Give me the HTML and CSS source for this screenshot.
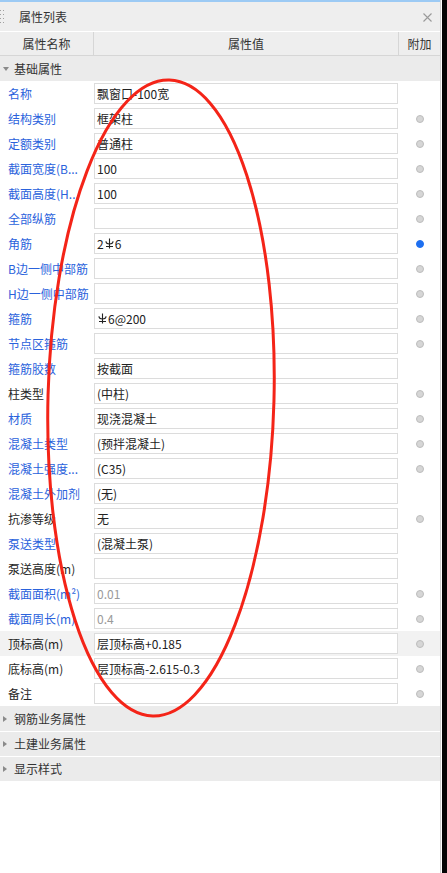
FILE: index.html
```html
<!DOCTYPE html>
<html lang="zh">
<head>
<meta charset="utf-8">
<title>属性列表</title>
<link rel="stylesheet" href="styles.css">
</head>
<body>
<div class="screen">
  <div class="panel">
    <div class="topline"></div>
    <div class="titlebar">
      <svg class="grip" width="5" height="14" viewBox="0 0 5 14"><g fill="#a0a0a0"><rect x="0" y="0" width="1" height="1"/><rect x="3" y="0" width="1" height="1"/><rect x="0" y="4" width="1" height="1"/><rect x="3" y="4" width="1" height="1"/><rect x="0" y="8" width="1" height="1"/><rect x="3" y="8" width="1" height="1"/><rect x="0" y="12" width="1" height="1"/><rect x="3" y="12" width="1" height="1"/></g></svg>
      <span class="title">属性列表</span>
      <svg class="close" width="9" height="9" viewBox="0 0 9 9"><path d="M0.5 0.5L8.5 8.5M8.5 0.5L0.5 8.5" stroke="#9a9a9a" stroke-width="1.1"/></svg>
    </div>
    <div class="colhead">
      <div class="ch ch-name">属性名称</div>
      <div class="ch ch-val">属性值</div>
      <div class="ch ch-add">附加</div>
    </div>
    <div class="section"><span class="tri down"></span>基础属性</div>
    <div class="rows">
      <div class="row"><span class="label blue">名称</span><span class="val">飘窗口-100宽</span><span class="add"></span></div>
      <div class="row"><span class="label blue">结构类别</span><span class="val">框架柱</span><span class="add"><i class="dot"></i></span></div>
      <div class="row"><span class="label blue">定额类别</span><span class="val">普通柱</span><span class="add"><i class="dot"></i></span></div>
      <div class="row"><span class="label blue">截面宽度(B...</span><span class="val">100</span><span class="add"><i class="dot"></i></span></div>
      <div class="row"><span class="label blue">截面高度(H...</span><span class="val">100</span><span class="add"><i class="dot"></i></span></div>
      <div class="row"><span class="label blue">全部纵筋</span><span class="val"></span><span class="add"><i class="dot"></i></span></div>
      <div class="row"><span class="label blue">角筋</span><span class="val">2<svg class="rebar" width="9" height="11" viewBox="0 0 9 11"><path d="M4.5 0.5V10.5M1 3.2C1 6.8 8 6.8 8 3.2M1 8.5H8" stroke="#222" stroke-width="1.1" fill="none"/></svg>6</span><span class="add"><i class="dot on"></i></span></div>
      <div class="row"><span class="label blue">B边一侧中部筋</span><span class="val"></span><span class="add"><i class="dot"></i></span></div>
      <div class="row"><span class="label blue">H边一侧中部筋</span><span class="val"></span><span class="add"><i class="dot"></i></span></div>
      <div class="row"><span class="label blue">箍筋</span><span class="val"><svg class="rebar" width="9" height="11" viewBox="0 0 9 11"><path d="M4.5 0.5V10.5M1 3.2C1 6.8 8 6.8 8 3.2M1 8.5H8" stroke="#222" stroke-width="1.1" fill="none"/></svg>6@200</span><span class="add"><i class="dot"></i></span></div>
      <div class="row"><span class="label blue">节点区箍筋</span><span class="val"></span><span class="add"><i class="dot"></i></span></div>
      <div class="row"><span class="label blue">箍筋胶数</span><span class="val">按截面</span><span class="add"></span></div>
      <div class="row"><span class="label">柱类型</span><span class="val">(中柱)</span><span class="add"><i class="dot"></i></span></div>
      <div class="row"><span class="label blue">材质</span><span class="val">现浇混凝土</span><span class="add"><i class="dot"></i></span></div>
      <div class="row"><span class="label blue">混凝土类型</span><span class="val">(预拌混凝土)</span><span class="add"><i class="dot"></i></span></div>
      <div class="row"><span class="label blue">混凝土强度...</span><span class="val">(C35)</span><span class="add"><i class="dot"></i></span></div>
      <div class="row"><span class="label blue">混凝土外加剂</span><span class="val">(无)</span><span class="add"></span></div>
      <div class="row"><span class="label">抗渗等级</span><span class="val">无</span><span class="add"><i class="dot"></i></span></div>
      <div class="row"><span class="label blue">泵送类型</span><span class="val">(混凝土泵)</span><span class="add"></span></div>
      <div class="row"><span class="label">泵送高度(m)</span><span class="val"></span><span class="add"></span></div>
      <div class="row"><span class="label blue">截面面积(m²)</span><span class="val dim">0.01</span><span class="add"><i class="dot"></i></span></div>
      <div class="row"><span class="label blue">截面周长(m)</span><span class="val dim">0.4</span><span class="add"><i class="dot"></i></span></div>
      <div class="row hl"><span class="label">顶标高(m)</span><span class="val">层顶标高+0.185</span><span class="add"><i class="dot"></i></span></div>
      <div class="row"><span class="label">底标高(m)</span><span class="val">层顶标高-2.615-0.3</span><span class="add"><i class="dot"></i></span></div>
      <div class="row"><span class="label">备注</span><span class="val"></span><span class="add"><i class="dot"></i></span></div>
    </div>
    <div class="section closed first"><span class="tri right"></span>钢筋业务属性</div>
    <div class="section closed"><span class="tri right"></span>土建业务属性</div>
    <div class="section closed"><span class="tri right"></span>显示样式</div>
  </div>
  <div class="gap"></div>
  <div class="edge"></div>
  <svg class="annot" width="447" height="873" viewBox="0 0 447 873">
    <ellipse cx="161" cy="398" rx="113" ry="318" transform="rotate(1.5 161 398)" fill="none" stroke="#f42418" stroke-width="3"/>
  </svg>
</div>
</body>
</html>
```

FILE: styles.css
```css
* {
  box-sizing: border-box;
}

html, body {
  margin: 0;
  padding: 0;
  background: #ffffff;
}

body {
  font-family: "Noto Sans CJK SC", "Microsoft YaHei", "Noto Sans", sans-serif;
  font-size: 12px;
  line-height: 16px;
  color: #222222;
}

.screen {
  position: relative;
  width: 447px;
  height: 873px;
  display: flex;
  overflow: hidden;
}

.panel {
  width: 441px;
  border-right: 1px solid #d2d2d2;
  display: flex;
  flex-direction: column;
  background: #ffffff;
}

.gap {
  width: 1px;
  background: #ffffff;
}

.edge {
  flex: 1;
  background: #050505;
}

.topline {
  height: 2px;
  background: #9ccaf4;
}

.titlebar {
  height: 30px;
  background: #eeeeee;
  border-bottom: 1px solid #ffffff;
  display: flex;
  align-items: center;
}

.grip {
  margin-top: 1px;
}

.title {
  margin-left: 14px;
  color: #333333;
}

.close {
  margin-left: auto;
  margin-right: 8px;
  margin-top: 1px;
}

.colhead {
  height: 24px;
  background: #eeeeee;
  border-bottom: 1px solid #d6d6d6;
  display: grid;
  grid-template-columns: 94px 305px 1fr;
}

.ch {
  display: flex;
  align-items: center;
  justify-content: center;
  color: #333333;
}

.ch-name,
.ch-val {
  border-right: 1px solid #d6d6d6;
}

.section {
  height: 25px;
  background: #ebebeb;
  display: flex;
  align-items: center;
  color: #333333;
  padding-left: 3px;
}

.section.closed {
  border-top: 1px solid #ffffff;
}

.section.closed.first {
  border-top: none;
}

.tri {
  width: 0;
  height: 0;
  margin-right: 7px;
}

.tri.down {
  border-left: 3px solid transparent;
  border-right: 3px solid transparent;
  border-top: 4px solid #8a8a8a;
  margin-right: 5px;
}

.tri.right {
  border-top: 3px solid transparent;
  border-bottom: 3px solid transparent;
  border-left: 4px solid #8a8a8a;
}

.rows {
  display: flex;
  flex-direction: column;
}

.row {
  height: 25px;
  display: grid;
  grid-template-columns: 94px 304px 1fr;
  align-items: center;
}

.row.hl {
  background: #f2f2f2;
}

.label {
  padding-left: 8px;
  white-space: nowrap;
  color: #262626;
}

.label.blue {
  color: #2a62dc;
}

.val {
  height: 21px;
  border: 1px solid #dcdcdc;
  background: #ffffff;
  display: flex;
  align-items: center;
  padding-left: 2px;
  color: #222222;
  white-space: nowrap;
}

.val.dim {
  color: #9a9a9a;
}

.rebar {
  margin: 0 1px 1px 1px;
}

.add {
  display: flex;
  justify-content: center;
  align-items: center;
  padding-left: 1px;
}

.dot {
  display: block;
  width: 8px;
  height: 8px;
  border-radius: 50%;
  background: #d6d6d6;
  border: 1px solid #bdbdbd;
}

.dot.on {
  background: #1e6ff0;
  border-color: #1e6ff0;
}

.annot {
  position: absolute;
  left: 0;
  top: 0;
  pointer-events: none;
}
```
